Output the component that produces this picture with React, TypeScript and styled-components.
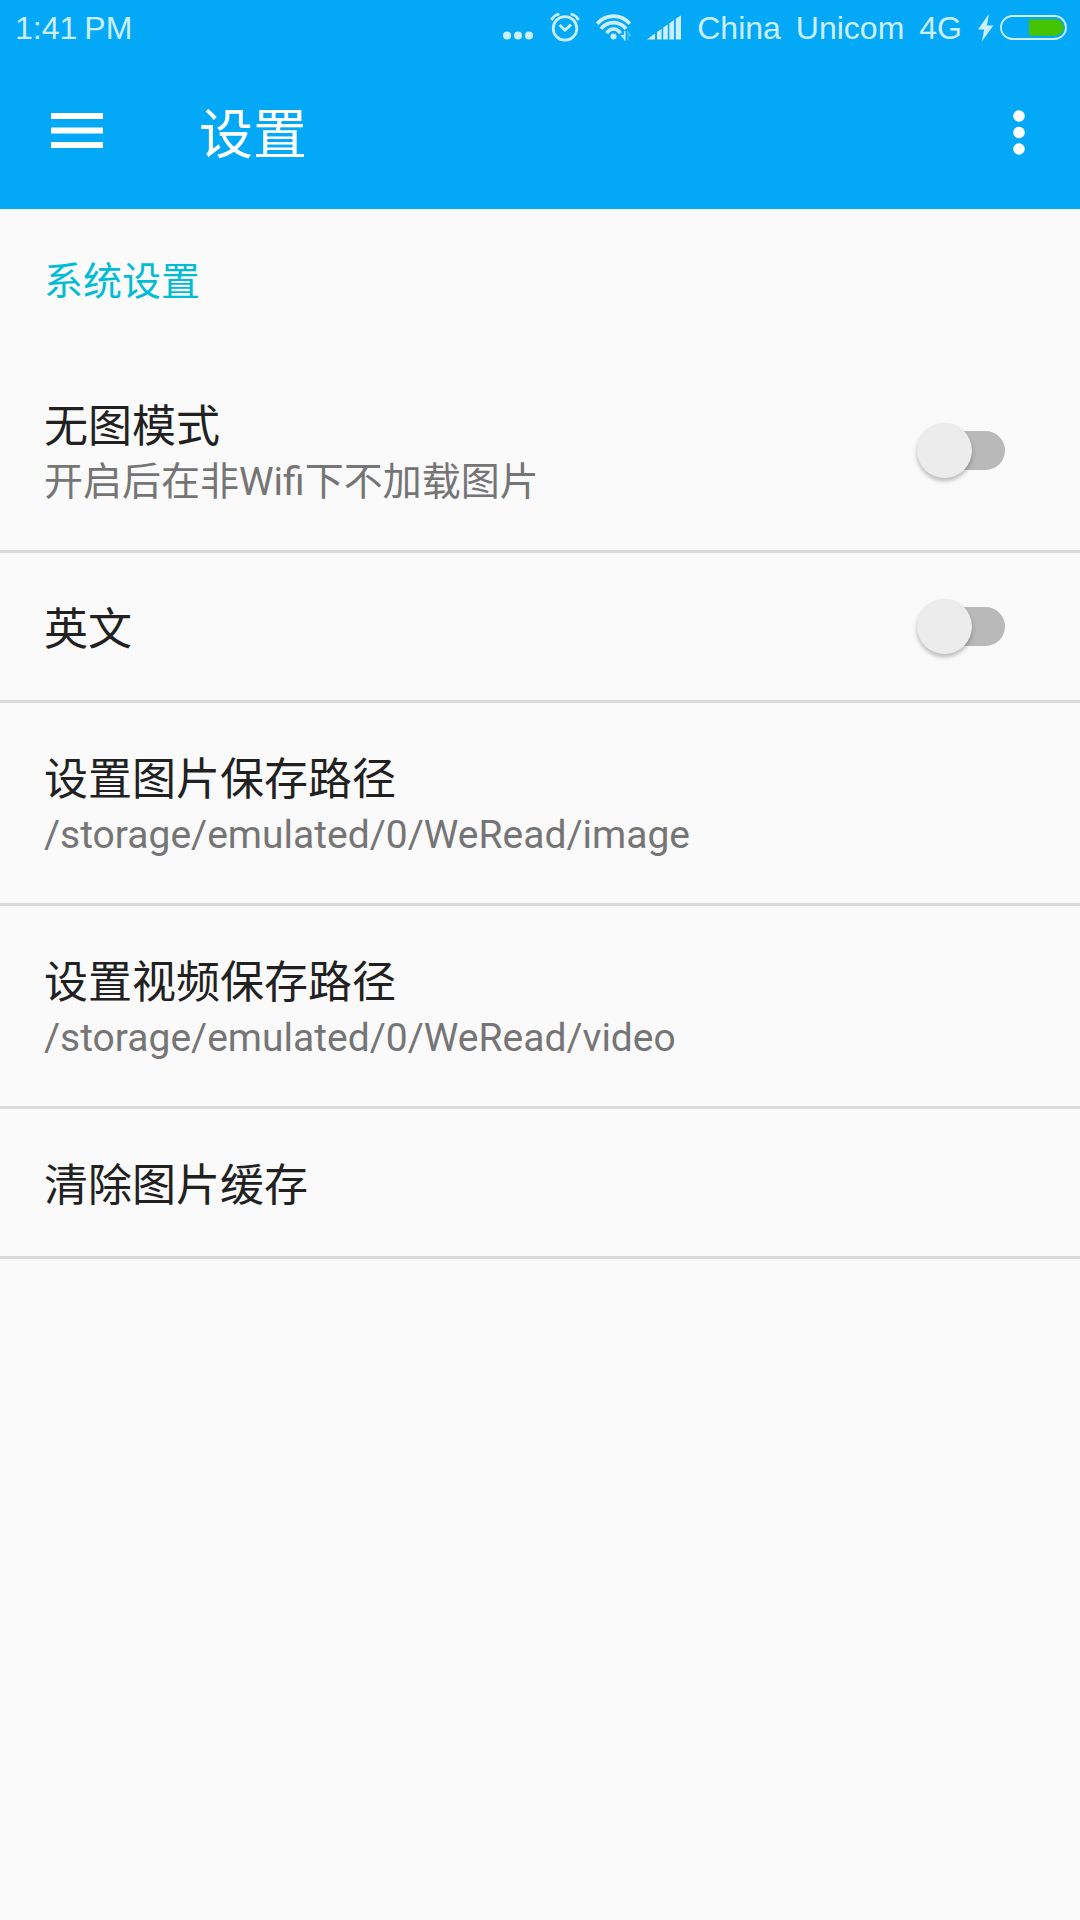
import React from "react";
import styled, { createGlobalStyle } from "styled-components";

const GlobalStyle = createGlobalStyle`
  *, *::before, *::after { box-sizing: border-box; }
  body {
    margin: 0;
    background: #fafafa;
    color: #212121;
    font-family: Roboto, "Noto Sans CJK SC", sans-serif;
  }
  button {
    border: 0;
    padding: 0;
    background: none;
    color: inherit;
    font: inherit;
    text-align: left;
    cursor: pointer;
  }
`;

const Header = styled.header`
  background: #03a9f6;
  color: #ffffff;
`;

const StatusBar = styled.div`
  display: flex;
  align-items: center;
  justify-content: space-between;
  height: 56px;
  padding: 0 13px 0 15px;
  color: #cdeeff;
  font-family: "Liberation Sans", Arial, sans-serif;
  font-size: 32px;
  line-height: 36px;
`;

const StatusGroup = styled.div<{ $gap: number }>`
  display: flex;
  align-items: center;
  gap: ${(p) => p.$gap}px;
`;

const Glyph = styled.svg`
  display: block;
  flex: none;
`;

const Toolbar = styled.div`
  display: flex;
  align-items: center;
  height: 153px;
  padding: 0 20px 0 36px;
`;

const IconButton = styled.button`
  display: grid;
  place-items: center;
  width: 82px;
  height: 96px;
`;

const PageTitle = styled.h1`
  flex: 1;
  margin: 0;
  padding: 6px 0 0 81px;
  font-size: 54px;
  font-weight: 400;
  line-height: 72px;
`;

const SectionTitle = styled.h2`
  margin: 0;
  padding: 45px 44px 39px;
  color: #00bcd4;
  font-size: 39px;
  font-weight: 400;
  line-height: 57px;
`;

const SettingList = styled.ul`
  margin: 0;
  padding: 0;
  list-style: none;
`;

const SettingItem = styled.li`
  border-bottom: 3px solid #dbdbdb;
`;

const SettingRow = styled.button`
  display: flex;
  align-items: center;
  justify-content: space-between;
  width: 100%;
  padding-right: 75px;
  cursor: pointer;
`;

const SettingText = styled.span`
  display: flex;
  flex-direction: column;
  padding: 48px 0 41px 44px;
`;

const Name = styled.span`
  font-size: 44px;
  line-height: 58px;
`;

const Summary = styled.span`
  color: #757575;
  font-size: 39px;
  line-height: 53px;
`;

const Switch = styled.input`
  appearance: none;
  display: flex;
  align-items: center;
  flex: none;
  width: 88px;
  height: 39px;
  margin: 0;
  border-radius: 20px;
  background: linear-gradient(to right, transparent 20px, #b9b9b9 20px);
  cursor: pointer;

  &::before {
    content: "";
    width: 55px;
    height: 55px;
    flex: none;
    border-radius: 50%;
    background: #ececec;
    box-shadow: 0 3px 4px rgba(0, 0, 0, 0.26);
  }

  &:checked {
    justify-content: flex-end;
    background: linear-gradient(to left, transparent 20px, #80deea 20px);
  }

  &:checked::before {
    background: #00bcd4;
  }
`;

function MoreNotifications() {
  return (
    <Glyph width="32" height="30" viewBox="0 0 32 30" fill="currentColor" aria-hidden="true">
      <circle cx="5" cy="22.5" r="4" />
      <circle cx="16" cy="22.5" r="4" />
      <circle cx="27" cy="22.5" r="4" />
    </Glyph>
  );
}

function AlarmIcon() {
  return (
    <Glyph width="30" height="30" viewBox="0 0 30 30" fill="none" stroke="currentColor" aria-hidden="true">
      <circle cx="15" cy="15.4" r="11.8" strokeWidth="2.7" />
      <path d="M9.6 12l5.4 5 6-5.4" strokeWidth="2.8" />
      <path d="M1.4 7Q4 2.2 9.4 1M28.6 7Q26 2.2 20.6 1" strokeWidth="2.8" />
    </Glyph>
  );
}

function WifiIcon() {
  return (
    <Glyph width="35" height="30" viewBox="0 0 35 30" fill="none" stroke="currentColor" aria-hidden="true">
      <path d="M1.2 10.8Q8 3.2 17.5 3.2T33.8 10.8" strokeWidth="3.7" />
      <path d="M5 15.8Q10 9.6 17.5 9.6T30 15.8" strokeWidth="3.7" />
      <path d="M10.8 20.2Q13.4 16 17.5 16T24.4 20.2" strokeWidth="3.7" />
      <circle cx="17.5" cy="23.6" r="3" fill="currentColor" stroke="none" />
      <path d="M28.8 18v9.4M28.8 22.2v4l-3-3.4z" strokeWidth="1.4" />
      <path d="M32 27.4V18.6l2.6 4H32" strokeWidth="1.2" opacity="0.35" />
    </Glyph>
  );
}

function SignalIcon() {
  return (
    <Glyph width="34" height="30" viewBox="0 0 34 30" fill="currentColor" aria-hidden="true">
      <path d="M0 26.4L8 20.6v5.8zM10 18.9l4.6-3v10.5H10zM16.2 14.6l4.6-3.2v15h-4.6zM22.4 10.2L27 7v19.4h-4.6zM28.8 5.8L34 2.4v24h-5.2z" />
    </Glyph>
  );
}

function ChargingIcon() {
  return (
    <Glyph width="16" height="28" viewBox="0 0 16 28" fill="currentColor" aria-hidden="true">
      <path d="M10.8 0L0 15.4h6.2L3.8 27.4 15.4 11.6H9z" />
    </Glyph>
  );
}

function BatteryIcon() {
  return (
    <Glyph width="67" height="26" viewBox="0 0 67 26" fill="none" aria-hidden="true">
      <rect x="1" y="1" width="65" height="23" rx="11.5" stroke="currentColor" strokeWidth="1.8" />
      <path d="M29 4.2h26.4a8.3 8.3 0 0 1 0 16.6H29z" fill="#46c300" />
    </Glyph>
  );
}

function MenuIcon() {
  return (
    <Glyph width="52" height="39" viewBox="0 0 52 39" fill="currentColor" aria-hidden="true">
      <path d="M0 0h52v6H0zM0 14.5h52v6H0zM0 29h52v6H0z" />
    </Glyph>
  );
}

function OverflowIcon() {
  return (
    <Glyph width="12" height="46" viewBox="0 0 12 46" fill="currentColor" aria-hidden="true">
      <circle cx="6" cy="6" r="5.8" />
      <circle cx="6" cy="22.5" r="5.8" />
      <circle cx="6" cy="39" r="5.8" />
    </Glyph>
  );
}

type Setting = { name: string; summary?: string; toggle?: boolean };

const settings: Setting[] = [
  { name: "无图模式", summary: "开启后在非Wifi下不加载图片", toggle: true },
  { name: "英文", toggle: true },
  { name: "设置图片保存路径", summary: "/storage/emulated/0/WeRead/image" },
  { name: "设置视频保存路径", summary: "/storage/emulated/0/WeRead/video" },
  { name: "清除图片缓存" },
];

function SettingEntry({ name, summary, toggle }: Setting) {
  const text = (
    <SettingText>
      <Name>{name}</Name>
      {summary && <Summary>{summary}</Summary>}
    </SettingText>
  );
  return (
    <SettingItem>
      {toggle ? (
        <SettingRow as="label">
          {text}
          <Switch type="checkbox" role="switch" />
        </SettingRow>
      ) : (
        <SettingRow type="button">{text}</SettingRow>
      )}
    </SettingItem>
  );
}

export default function App() {
  return (
    <>
      <GlobalStyle />
      <Header>
        <StatusBar>
          <StatusGroup $gap={7}>
            <span>1:41</span>
            <span>PM</span>
          </StatusGroup>
          <StatusGroup $gap={16}>
            <MoreNotifications />
            <AlarmIcon />
            <WifiIcon />
            <SignalIcon />
            <StatusGroup $gap={15}>
              <span>China</span>
              <span>Unicom</span>
              <span>4G</span>
            </StatusGroup>
            <StatusGroup $gap={6}>
              <ChargingIcon />
              <BatteryIcon />
            </StatusGroup>
          </StatusGroup>
        </StatusBar>
        <Toolbar>
          <IconButton type="button" aria-label="菜单">
            <MenuIcon />
          </IconButton>
          <PageTitle>设置</PageTitle>
          <IconButton type="button" aria-label="更多选项">
            <OverflowIcon />
          </IconButton>
        </Toolbar>
      </Header>
      <main>
        <SectionTitle>系统设置</SectionTitle>
        <SettingList>
          {settings.map((s) => (
            <SettingEntry key={s.name} {...s} />
          ))}
        </SettingList>
      </main>
    </>
  );
}
